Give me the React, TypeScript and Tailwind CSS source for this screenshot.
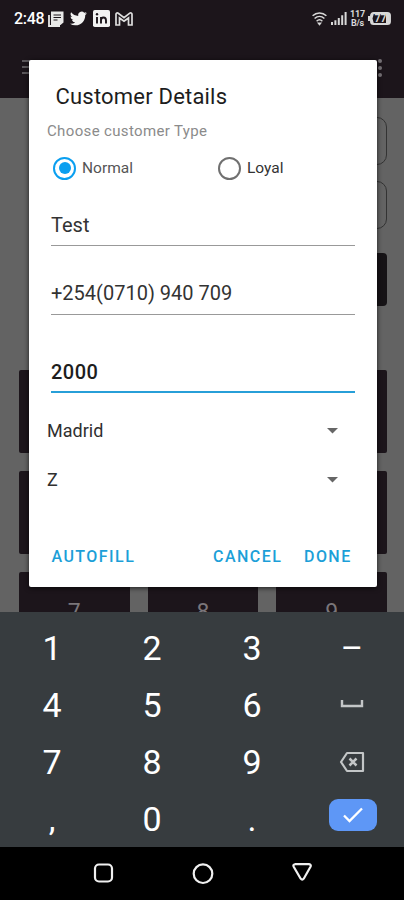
import type { ReactNode } from "react";

const KeySpace = () => (
  <svg className="mt-[-2px]" width="24" height="10" viewBox="0 0 24 10" fill="none">
    <path d="M2 1v6h20V1" stroke="#c3c6c7" strokeWidth="2.4" />
  </svg>
);

const KeyBackspace = () => (
  <svg width="26" height="22" viewBox="0 0 26 22" fill="none">
    <path d="M8 2h16v18H8L2 11z" stroke="#c3c6c7" strokeWidth="2.200" strokeLinejoin="round" />
    <path d="M10.500 7.500l7 7m0-7l-7 7" stroke="#c3c6c7" strokeWidth="2.500" />
  </svg>
);

const KeyDone = () => (
  <span className="ml-[1px] mt-[-8px] flex h-8 w-12 items-center justify-center rounded-[9px] bg-[#5e97f6]">
    <svg width="22" height="18" viewBox="0 0 22 18" fill="none">
      <path d="M2 9.500l5.500 5.500L20 2.500" stroke="#fff" strokeWidth="2.300" />
    </svg>
  </span>
);

const keys: ReactNode[] = [
  "1", "2", "3", "–",
  "4", "5", "6", <KeySpace />,
  "7", "8", "9", <KeyBackspace />,
  ",", "0", ".", <KeyDone />,
];

const StatusBar = () => (
  <div className="flex h-[37px] items-center justify-between pl-[14px] pr-[13px]">
    <div className="flex items-center text-white">
      <span className="w-[31px] text-[16px] font-medium leading-none tracking-[-0.3px]">2:48</span>
      <svg className="ml-[3px]" width="16" height="16" viewBox="0 0 16 16">
        <path d="M3 .5h12.500v11l-3 2.500H3z" fill="#e8e8e8" />
        <path d="M1 4v11h11" stroke="#e8e8e8" strokeWidth="1.800" fill="none" />
        <path d="M5.500 4h7.500M5.500 6.500h7.500M5.500 9h4" stroke="#1c151b" strokeWidth="1" />
      </svg>
      <svg className="ml-[6px]" width="17" height="17" viewBox="0 0 24 24" fill="#f2f2f2">
        <path d="M23.9 4.6a10 10 0 0 1-2.8.8 5 5 0 0 0 2.1-2.7c-.9.5-2 1-3.1 1.2a4.9 4.9 0 0 0-8.4 4.5A14 14 0 0 1 1.6 3.2a4.9 4.9 0 0 0 1.6 6.5 4.9 4.9 0 0 1-2.3-.6v.1a4.9 4.9 0 0 0 4 4.8 5 5 0 0 1-2.2.1 4.9 4.9 0 0 0 4.6 3.4A9.9 9.9 0 0 1 0 19.5a14 14 0 0 0 7.5 2.2c9.1 0 14-7.5 14-14v-.6a10 10 0 0 0 2.4-2.5z" />
      </svg>
      <svg className="ml-[6px]" width="17" height="17" viewBox="0 0 17 17">
        <rect width="17" height="17" rx="1.800" fill="#f2f2f2" />
        <path d="M4 7v6.500M8 7v6.500M8 10.500c0-4 5-4 5 0v3" stroke="#1c151b" strokeWidth="1.900" fill="none" />
        <circle cx="4" cy="4.300" r="1.200" fill="#1c151b" />
      </svg>
      <svg className="ml-[5px]" width="18" height="14" viewBox="0 0 18 14" fill="none" stroke="#dedede">
        <path d="M1 13V2.200C1 .8 2.400.6 3.200 1.200L9 5.700l5.800-4.500c.8-.6 2.200-.4 2.200 1V13h-3.500V6L9 9.300 4.500 6v7z" strokeWidth="1.700" />
      </svg>
    </div>
    <div className="flex items-center text-[#d8d8d8]">
      <svg width="15" height="14" viewBox="0 0 15 14" fill="none" stroke="#d8d8d8">
        <path d="M.6 3.800c4-3.800 9.800-3.800 13.800 0M2.600 6.500c2.900-2.800 6.900-2.800 9.800 0M4.600 9.200c1.700-1.600 4.100-1.600 5.800 0" strokeWidth="1.500" />
        <path d="M5 10.500h5L7.500 13.800z" fill="#d8d8d8" stroke="none" />
      </svg>
      <svg className="ml-[4px]" width="16" height="13" viewBox="0 0 16 13" fill="#d8d8d8">
        <path d="M0 10h2v3H0zM3.400 8.300h2V13h-2zM6.800 6h2v7h-2zM10.200 3.300h2V13h-2zM13.600 0h2v13h-2z" />
      </svg>
      <div className="ml-[3px] w-[15px] text-center text-[9px] font-bold leading-[9px] tracking-[-0.2px]">
        <div>117</div>
        <div>B/s</div>
      </div>
      <svg className="ml-[3px]" width="23" height="13" viewBox="0 0 23 13">
        <path d="M0 4h2.500v5H0z" fill="#d8d8d8" />
        <rect x="3" y="1" width="19" height="11" rx="2.600" fill="none" stroke="#d8d8d8" strokeWidth="1.900" />
        <path d="M18 1h3.500v11H18zM3 1h3L4.500 6.500 6 12H3z" fill="#d8d8d8" />
        <text x="6.500" y="10.200" fontSize="10.500" fontWeight="700" fill="#d8d8d8" fontFamily="Roboto, sans-serif">77</text>
      </svg>
    </div>
  </div>
);

const AppBar = () => (
  <div className="flex h-[61px] items-start justify-between pl-[22px] pr-[22px]">
    <div className="mt-[23px] flex flex-col gap-[4px]">
      <div className="h-[2px] w-[18px] bg-[#5c585c]" />
      <div className="h-[2px] w-[18px] bg-[#5c585c]" />
      <div className="h-[2px] w-[18px] bg-[#5c585c]" />
    </div>
    <div className="mt-[22px] flex flex-col gap-[3px]">
      <div className="size-[4px] rounded-full bg-[#767276]" />
      <div className="size-[4px] rounded-full bg-[#767276]" />
      <div className="size-[4px] rounded-full bg-[#767276]" />
    </div>
  </div>
);

// Dimmed sale screen that sits under the dialog
const SaleScreen = () => (
  <div className="h-[514px] overflow-hidden bg-[#636363] pl-[19px] pr-[17px] pt-[19px]">
    <div className="ml-[18px] h-[48px] rounded-[10px] border border-[#333]" />
    <div className="ml-[18px] mt-[16px] h-[48px] rounded-[10px] border border-[#333]" />
    <div className="ml-[18px] mt-[24px] h-[53px] rounded-[4px] bg-[#161316]" />
    <div className="mt-[64px] grid grid-cols-3 gap-[18px] text-center text-[23px] text-[#7a767a]">
      {["", "", "", "", "", "", "7", "8", "9"].map((n, i) => (
        <div key={i} className="h-[83px] rounded-[2px] bg-[#1c151b] pt-[24px]">
          {n}
        </div>
      ))}
    </div>
  </div>
);

const Radio = ({ label, checked }: { label: string; checked?: boolean }) => (
  <div className="flex w-[165px] shrink-0 items-center">
    <span
      className={
        checked
          ? "flex size-[23px] items-center justify-center rounded-full border-2 border-[#0a9ff0]"
          : "size-[23px] rounded-full border-2 border-[#707070]"
      }
    >
      {checked && <span className="size-[12px] rounded-full bg-[#0a9ff0]" />}
    </span>
    <span
      className={
        checked
          ? "ml-[6px] pt-[2px] text-[15.500px] text-[#555]"
          : "ml-[6px] pt-[2px] text-[15.500px] text-[#333]"
      }
    >
      {label}
    </span>
  </div>
);

const Select = ({ value }: { value: string }) => (
  <div className="flex h-[49px] items-center justify-between pl-[18px] pr-[39px] text-[18px] text-[#303030]">
    <span>{value}</span>
    <svg width="11" height="6" viewBox="0 0 11 6">
      <path d="M0 0h11L5.500 5.500z" fill="#666" />
    </svg>
  </div>
);

const CustomerDialog = () => (
  <div className="absolute left-[29px] top-[60px] h-[527px] w-[348px] rounded-[2px] bg-white shadow-[0_1px_5px_rgba(0,0,0,0.7)]">
    <h1 className="pl-[26.500px] pt-[22px] text-[22px] leading-[30px] tracking-[0.2px] text-[#1d1d1d]">Customer Details</h1>
    <p className="pl-[18px] pt-[9px] text-[15px] leading-[20px] tracking-[0.35px] text-[#8b8b8b]">Choose customer Type</p>
    <div className="flex h-[54px] items-center pl-[24px]">
      <Radio label="Normal" checked />
      <Radio label="Loyal" />
    </div>
    <div className="mx-[22px]">
      <div className="flex h-[51px] items-end border-b border-[#999] pb-[7px] text-[20px] leading-[25px] text-[#333]">
        Test
      </div>
      <div className="flex h-[69px] items-end border-b border-[#999] pb-[8px] text-[20px] leading-[25px] text-[#333]">
        +254(0710) 940 709
      </div>
      <div className="flex h-[78px] items-end border-b-2 border-[#279fd8] pb-[6px] text-[20px] font-medium leading-[25px] tracking-[0.5px] text-[#1d1d1d]">
        2000
      </div>
    </div>
    <div className="pt-[13px]">
      <Select value="Madrid" />
      <Select value="Z" />
    </div>
    <div className="flex pl-[22.500px] pt-[43px] text-[16px] font-medium leading-[20px] tracking-[1.450px] text-[#1c9fd8]">
      <span className="w-[161.500px]">AUTOFILL</span>
      <span className="w-[91px]">CANCEL</span>
      <span>DONE</span>
    </div>
  </div>
);

const Keyboard = () => (
  <div className="h-[235px] bg-[#373c3f] px-[2px] pt-[7px]">
    <div className="grid grid-cols-4">
      {keys.map((key, i) => (
        <div key={i} className="flex h-[57px] items-center justify-center text-[34px] leading-none text-white">
          {key}
        </div>
      ))}
    </div>
  </div>
);

const NavBar = () => (
  <div className="flex h-[53px] items-center justify-center gap-[78px] bg-black pl-[1px]">
    <svg width="21" height="21" viewBox="0 0 21 21" fill="none" stroke="#f0f0f0" strokeWidth="2.200">
      <rect x="2" y="1.500" width="17" height="17" rx="4" />
    </svg>
    <svg width="22" height="22" viewBox="0 0 22 22" fill="none" stroke="#f0f0f0" strokeWidth="2.200">
      <circle cx="11" cy="10.700" r="9.300" />
    </svg>
    <svg width="21" height="21" viewBox="0 0 21 21" fill="none" stroke="#f0f0f0" strokeWidth="2.200">
      <path d="M3 1.200h14q2.500 .5 1.500 2.500l-6.800 12q-1.500 2-3 0L1.700 3.700q-1-2 1.300-2.500z" strokeLinejoin="round" />
    </svg>
  </div>
);

const App = () => {
  return (
    <div className="relative h-[900px] w-[404px] overflow-hidden bg-[#1c151b] font-[Roboto,sans-serif]">
      <StatusBar />
      <AppBar />
      <SaleScreen />
      <Keyboard />
      <NavBar />
      <CustomerDialog />
    </div>
  );
};

export default App;
